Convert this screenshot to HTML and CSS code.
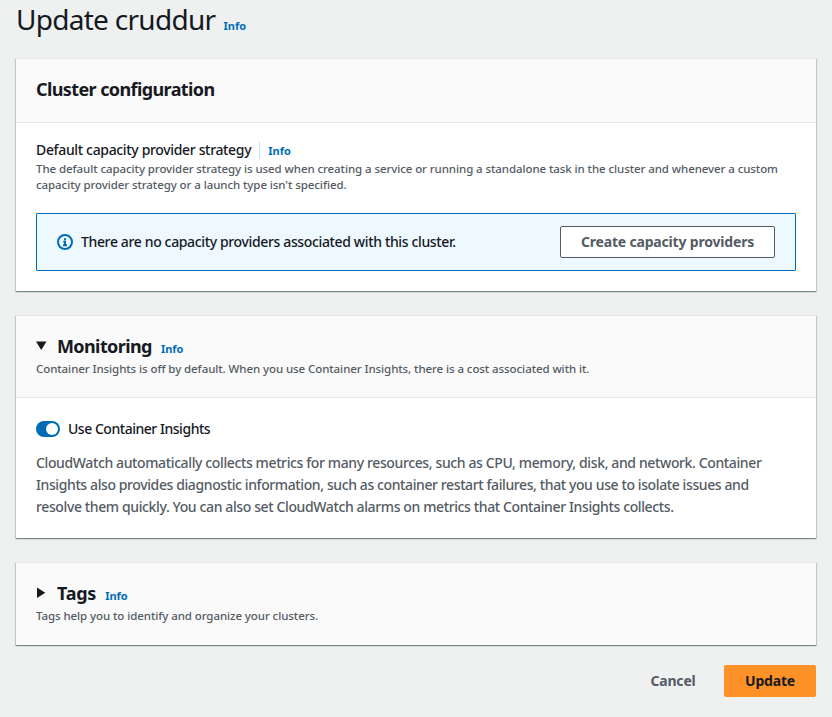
FILE: index.html
```html
<!DOCTYPE html>
<html lang="en">
<head>
<meta charset="utf-8">
<title>Update cruddur</title>
<link rel="stylesheet" href="styles.css">
</head>
<body>
<header class="page-head"><h1>Update cruddur</h1><a class="info">Info</a></header>
<main>
  <section class="card card-config">
    <div class="card-head"><h2>Cluster configuration</h2></div>
    <div class="card-body">
      <div class="field-label"><span class="label">Default capacity provider strategy</span><a class="info divided">Info</a></div>
      <p class="hint">The default capacity provider strategy is used when creating a service or running a standalone task in the cluster and whenever a custom<br>capacity provider strategy or a launch type isn't specified.</p>
      <div class="alert">
        <svg class="alert-icon" viewBox="0 0 16 16"><circle cx="8" cy="8" r="7"/><path d="M6.300 7.800H8V11M6 11.200h4M7 5.200h2"/></svg>
        <span class="alert-text">There are no capacity providers associated with this cluster.</span>
        <button class="btn outline">Create capacity providers</button>
      </div>
    </div>
  </section>
  <section class="card card-monitoring">
    <div class="card-head">
      <div class="title-row"><svg class="caret" viewBox="0 0 12 12"><path d="M0 1.500h10.500L5.250 10z"/></svg><h2>Monitoring</h2><a class="info">Info</a></div>
      <p class="hint">Container Insights is off by default. When you use Container Insights, there is a cost associated with it.</p>
    </div>
    <div class="card-body">
      <div class="toggle-row"><span class="toggle"></span><span class="toggle-label">Use Container Insights</span></div>
      <p class="description">CloudWatch automatically collects metrics for many resources, such as CPU, memory, disk, and network. Container<br><span class="description-mid">Insights also provides diagnostic information, such as container restart failures, that you use to isolate issues and</span><br>resolve them quickly. You can also set CloudWatch alarms on metrics that Container Insights collects.</p>
    </div>
  </section>
  <section class="card card-tags">
    <div class="card-head">
      <div class="title-row"><svg class="caret" viewBox="0 0 12 12"><path d="M1 .5v10.500L9.300 5.750z"/></svg><h2 class="short">Tags</h2><a class="info">Info</a></div>
      <p class="hint">Tags help you to identify and organize your clusters.</p>
    </div>
  </section>
</main>
<footer class="actions"><button class="btn link">Cancel</button><button class="btn primary">Update</button></footer>
</body>
</html>
```

FILE: styles.css
```css
* { box-sizing: border-box; }
body { margin: 0; padding: 0 16px; height: 717px; overflow: hidden; background: #eff1f1; color: #16191f; font: 500 14px/22px "Noto Sans", "Open Sans", sans-serif; letter-spacing: -.36px; white-space: nowrap; }
h1, h2, p { margin: 0; }
.page-head { height: 58px; display: flex; }
h1 { width: 207.5px; font-size: 28px; font-weight: 400; line-height: 38px; letter-spacing: -.72px; }
.info { color: #006cb7; font-size: 11px; font-weight: 700; line-height: 16px; letter-spacing: 0; }
.page-head .info { margin-top: 18px; }
main { display: flex; flex-direction: column; gap: 24px; }
.card { background: #fff; box-shadow: 0 1px 1px rgba(0,28,36,.3), 1px 1px 1px rgba(0,28,36,.15), -1px 1px 1px rgba(0,28,36,.15); border-top: 1px solid #e5e8e8; }
.card-config { height: 233px; }
.card-monitoring { height: 223px; }
.card-tags { height: 83px; }
.card-head { background: #fafafa; border-bottom: 1px solid #e5e8e8; padding: 19px 20px 0; }
.card-config .card-head { height: 64px; }
.card-monitoring .card-head { height: 82px; }
.card-tags .card-head { height: 82px; border: 0; }
h2 { font-size: 18px; line-height: 22px; font-weight: 700; letter-spacing: -.6px; }
h2.short { letter-spacing: -.25px; }
.card-body { padding: 16px 20px 0; }
.field-label { display: flex; align-items: center; }
.label { letter-spacing: -.34px; }
.divided { border-left: 1px solid #d5dbdb; padding: 1px 0 0 8px; margin-left: 8px; }
.hint { color: #545b64; font-size: 11.5px; line-height: 16px; letter-spacing: -.083px; }
.card-head .hint { margin-top: 4px; }
.alert { margin-top: 20px; height: 58px; padding: 0 20px; display: flex; align-items: center; border: 1px solid #006cb7; border-radius: 1px; background: #edf8ff; }
.alert-icon { width: 16px; height: 16px; margin-right: 8px; fill: none; stroke: #006cb7; stroke-width: 2; }
.btn { border: 0; background: none; padding: 0; height: 32px; font: 700 14px/22px "Noto Sans", sans-serif; letter-spacing: -.18px; color: #545b64; border-radius: 2px; }
.outline { width: 215px; margin-left: auto; border: 1px solid #545b64; background: #fff; }
.title-row { display: flex; align-items: center; }
.caret { width: 12px; height: 12px; margin-right: 9px; fill: #16191f; }
.title-row .info { margin-left: 9px; padding-top: 6px; }
.toggle-row { display: flex; align-items: center; padding-top: 4px; }
.toggle-label { letter-spacing: -.47px; }
.toggle { width: 24px; height: 16px; border-radius: 8px; background: #006cb7; padding: 2px; margin-right: 8px; }
.toggle::after { content: ""; display: block; width: 12px; height: 12px; border-radius: 50%; background: #fff; margin-left: 8px; }
.description { color: #545b64; margin-top: 12px; letter-spacing: -.38px; }
.description-mid { letter-spacing: -.395px; }
.actions { display: flex; justify-content: flex-end; margin-top: 20px; }
.link { width: 102px; }
.primary { width: 92px; background: #ff9129; color: #16191f; }
```
